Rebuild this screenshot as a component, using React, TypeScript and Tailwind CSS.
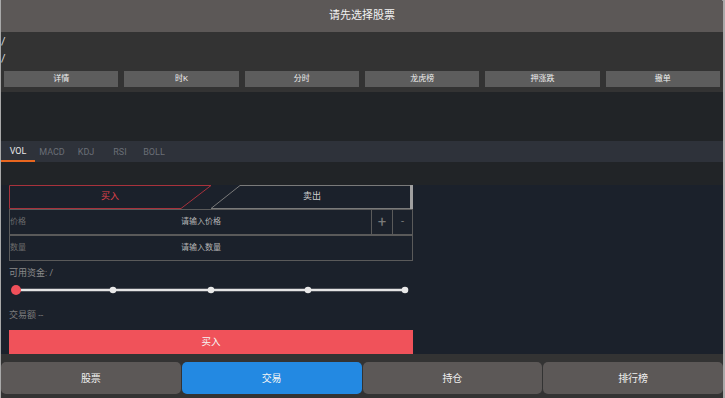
import React from "react";

const font = { fontFamily: "Roboto, 'Noto Sans CJK SC', sans-serif" };

function BuySellTabs() {
  return (
    <div className="relative h-[24px] w-[404px]">
      <svg className="absolute inset-0" width="404" height="24" viewBox="0 0 404 24">
        <path d="M0.5 23.5 L0.5 0.5 L202 0.5 L172 23.5 Z" fill="#1b212b" stroke="#a8323c" strokeWidth="1" />
        <path d="M231 0.5 L402 0.5 L402 23.5 L202 23.5 Z" fill="#1b212b" stroke="#7a7a7a" strokeWidth="1" />
        <line x1="402.5" y1="0" x2="402.5" y2="24" stroke="#a0a0a0" strokeWidth="3" />
      </svg>
      <div className="relative flex h-full items-center text-[9px]">
        <div className="w-[202px] text-center text-[#e0434b]">买入</div>
        <div className="flex-1 text-center text-[#d0d0d0]">卖出</div>
      </div>
    </div>
  );
}

function Slider() {
  const dots = [113, 211, 308, 405];
  return (
    <svg width="404" height="14" viewBox="9 284 404 14" className="block">
      <line x1="16" y1="291" x2="405" y2="291" stroke="#e4e4e4" strokeWidth="2.5" />
      {dots.map((x) => (
        <circle key={x} cx={x} cy="291" r="3.3" fill="#e8e8e8" />
      ))}
      <circle cx="16" cy="291" r="5" fill="#f0505a" />
    </svg>
  );
}

export default function App() {
  const topButtons = ["详情", "时K", "分时", "龙虎榜", "押涨跌", "撤单"];
  const tabs = ["VOL", "MACD", "KDJ", "RSI", "BOLL"];
  const navs = ["股票", "交易", "持仓", "排行榜"];
  return (
    <div className="flex h-[398px] w-[725px] bg-[#a9a9a9]" style={font}>
      <div className="ml-px flex h-[398px] w-[722px] flex-col overflow-hidden rounded-tr-[3px] bg-[#1b212b]">
        <div className="flex h-[32px] items-center justify-center bg-[#5c5857] text-[11px] text-[#f2f2f2]">
          请先选择股票
        </div>
        <div className="flex h-[60px] flex-col bg-[#333333]">
          <div className="pt-[1px] text-[11px] leading-[17px] text-[#dddddd]">
            <div>/</div>
            <div>/</div>
          </div>
          <div className="mt-[4px] flex gap-[6px] px-[3px]">
            {topButtons.map((b) => (
              <div
                key={b}
                className="flex h-[16px] flex-1 items-center justify-center bg-[#5d5d5d] text-[8px] text-[#eeeeee]"
              >
                {b}
              </div>
            ))}
          </div>
        </div>
        <div className="h-[49px] bg-[#212427]" />
        <div className="flex h-[21px] bg-[#2e323a]">
          {tabs.map((t, i) => (
            <div
              key={t}
              className={
                i === 0
                  ? "flex w-[34px] items-center justify-center border-b-2 border-[#e8661f] pt-[2px] text-[9px] text-[#e6e6e6]"
                  : "flex w-[34px] items-center justify-center pt-[2px] text-[9px] text-[#6a6e76]"
              }
            >
              {t}
            </div>
          ))}
        </div>
        <div className="h-[23px] bg-[#212427]" />
        <div className="flex h-[169px] flex-col bg-[#1b212b] pl-[8px]">
          <BuySellTabs />
          <div className="flex h-[27px] w-[404px] items-center border border-[#5a5a5a] text-[8px]">
            <div className="w-[171px] text-[#6c6c6c]">价格</div>
            <div className="flex-1 text-[#b4b4b4]">请输入价格</div>
            <div className="flex h-full w-[21px] items-center justify-center border-l border-[#5a5a5a] text-[15px] text-[#7a7a7a]">
              +
            </div>
            <div className="flex h-full w-[20px] items-center justify-center border-l border-[#5a5a5a] text-[11px] text-[#7a7a7a]">
              -
            </div>
          </div>
          <div className="flex h-[27px] w-[404px] items-center border border-[#5a5a5a] text-[8px]">
            <div className="w-[171px] text-[#6c6c6c]">数量</div>
            <div className="flex-1 text-[#b4b4b4]">请输入数量</div>
          </div>
          <div className="mt-[5px] h-[14px] text-[9px] leading-[14px] text-[#8a8a8a]">可用资金: /</div>
          <div className="mt-[3px]">
            <Slider />
          </div>
          <div className="mt-[11px] h-[14px] text-[9px] leading-[14px] text-[#7c7c7c]">交易额 --</div>
          <div className="mt-[8px] flex h-[24px] w-[404px] items-center justify-center bg-[#f0525a] text-[9.5px] text-[#f5f5f5]">
            买入
          </div>
        </div>
        <div className="flex h-[44px] gap-px bg-[#333333] pt-[8px] pb-[4px]">
          {navs.map((n, i) => (
            <div
              key={n}
              className={
                i === 1
                  ? "flex flex-1 items-center justify-center rounded-[5px] bg-[#2389e2] text-[10px] text-[#f5f5f5]"
                  : "flex flex-1 items-center justify-center rounded-[5px] bg-[#5c5857] text-[10px] text-[#f0f0f0]"
              }
            >
              {n}
            </div>
          ))}
        </div>
      </div>
    </div>
  );
}
